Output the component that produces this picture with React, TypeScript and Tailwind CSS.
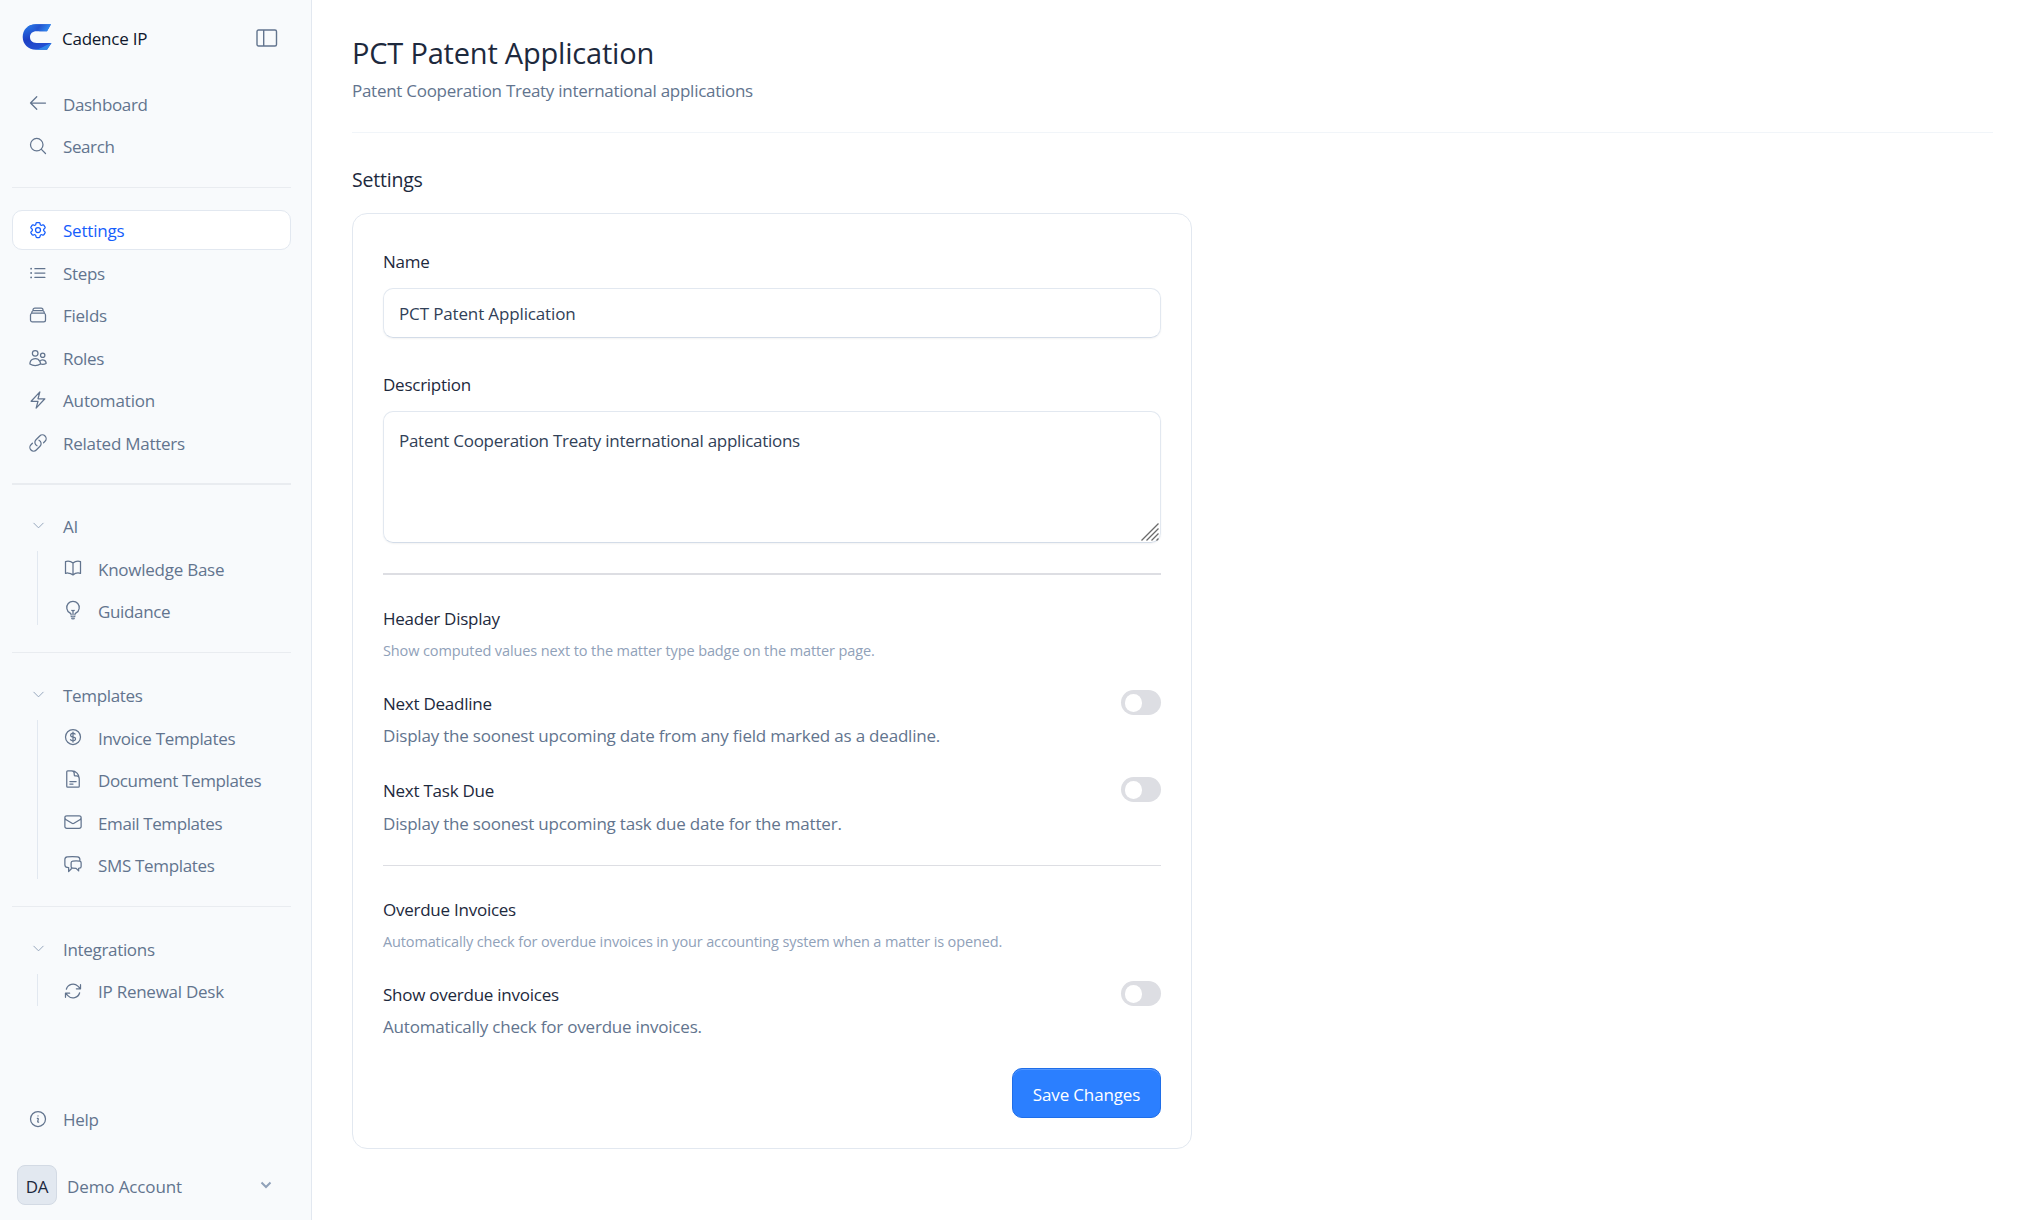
import type { ReactNode } from "react";
import type { IconType } from "react-icons";
import {
  HiOutlineArrowLeft,
  HiOutlineMagnifyingGlass,
  HiOutlineCog6Tooth,
  HiOutlineListBullet,
  HiOutlineRectangleStack,
  HiOutlineUsers,
  HiOutlineBolt,
  HiOutlineLink,
  HiOutlineBookOpen,
  HiOutlineLightBulb,
  HiOutlineCurrencyDollar,
  HiOutlineDocumentText,
  HiOutlineEnvelope,
  HiOutlineChatBubbleLeftRight,
  HiOutlineArrowPath,
  HiOutlineInformationCircle,
  HiOutlineChevronDown,
} from "react-icons/hi2";

function Logo() {
  return (
    <svg width="30" height="26" viewBox="0 0 30 26" className="shrink-0">
      <defs>
        <linearGradient id="logoTop" x1="0" y1="0" x2="1" y2="0.2">
          <stop offset="0" stopColor="#2a7be8" />
          <stop offset="0.55" stopColor="#2454cf" />
          <stop offset="1" stopColor="#2f8af0" />
        </linearGradient>
        <linearGradient id="logoBody" x1="0" y1="0" x2="0.3" y2="1">
          <stop offset="0" stopColor="#2a80ec" />
          <stop offset="0.6" stopColor="#1d3fc4" />
          <stop offset="1" stopColor="#2450d2" />
        </linearGradient>
      </defs>
      <path d="M29 0.3H14C5.500 0.300 0.700 6 0.700 13C0.700 20 6 25.700 14 25.700H25L29.500 18.900H14.500C10.500 18.900 8 16.500 8 13C8 9.500 10.500 7.200 14.500 7.200H25Z" fill="url(#logoBody)" />
      <path d="M29 0.300H14C10.500 0.300 7.500 1.300 5.300 3C10 2.500 13 5 17.500 7.200H25Z" fill="url(#logoTop)" />
      <path d="M13 25.700C17 25.500 21 22.500 29.500 18.900L25 25.700Z" fill="#2f86ea" />
    </svg>
  );
}

function PanelIcon() {
  return (
    <svg width="22" height="18" viewBox="0 0 22 18" fill="none" stroke="#62748e" strokeWidth="1.400">
      <rect x="1" y="1" width="19.500" height="16" rx="1.500" />
      <path d="M7.700 1V17" />
    </svg>
  );
}

type NavItemProps = {
  icon: IconType;
  label: string;
  active?: boolean;
  track?: string;
  pad?: string;
};

function NavItem({ icon: Icon, label, active, track = "tracking-[-0.25px]", pad = "pt-[3px]" }: NavItemProps) {
  return (
    <div
      className={`mb-[2.5px] flex h-10 items-center rounded-[10px] border pl-[15px] ${
        active ? "border-slate-200 bg-white text-[#155dfc]" : "border-transparent text-[#62748e]"
      }`}
    >
      <Icon size={20} strokeWidth={1.5} className="shrink-0" />
      <span className={`ml-[15px] leading-[30px] ${pad} ${track}`}>{label}</span>
    </div>
  );
}

function Group({ title, children }: { title: string; children: ReactNode }) {
  return (
    <div>
      <div className="mb-[2.5px] flex h-10 items-center pl-[19px] text-[#62748e]">
        <HiOutlineChevronDown size={15} className="mt-px shrink-0 text-[#90a1b9]" />
        <span className="ml-[17px] pt-[4px] leading-[30px] tracking-[-0.32px]">{title}</span>
      </div>
      <div className="relative pl-[35px]">
        <div className="absolute top-[3px] bottom-[5px] left-[25px] w-px bg-slate-200" />
        {children}
      </div>
    </div>
  );
}

function Field({ title, text, gap = "mt-[2px]" }: { title: string; text: string; gap?: string }) {
  return (
    <div className="flex h-[63px] justify-between">
      <div className="pt-px">
        <div className="leading-[30px] text-[#1d293d]">{title}</div>
        <div className={`leading-[30px] tracking-[-0.2px] text-[#62748e] ${gap}`}>{text}</div>
      </div>
      <div className="mt-[2px] flex h-[25px] w-10 items-center rounded-full bg-[#dddee3] pl-1">
        <div className="h-[18px] w-[17px] rounded-full bg-white" />
      </div>
    </div>
  );
}

function ResizeHandle() {
  return (
    <svg width="18" height="18" viewBox="0 0 18 18" stroke="#6b6b6b" strokeWidth="1.300" className="absolute right-[1px] bottom-[1px]">
      <path d="M0.500 17.500L17.500 0.500M5.500 17.500L17.500 5.500M10.500 17.500L17.500 10.500M15.500 17.500L17.500 15.500" />
    </svg>
  );
}

export default function App() {
  return (
    <div className="flex h-[1220px] w-[2025px] overflow-hidden bg-white font-['Open_Sans',sans-serif] text-[17px] tracking-[-0.25px] whitespace-nowrap">
      <aside className="flex w-[312px] shrink-0 flex-col border-r border-slate-200 bg-slate-50 pr-5 pl-3">
        <div className="flex h-[83px] items-start pt-6 pl-[10px]">
          <Logo />
          <span className="ml-[10px] leading-[30px] text-[#0f172b]">Cadence IP</span>
          <span className="mt-[4.500px] mr-[13px] ml-auto">
            <PanelIcon />
          </span>
        </div>
        <NavItem icon={HiOutlineArrowLeft} label="Dashboard" track="tracking-[-0.35px]" />
        <NavItem icon={HiOutlineMagnifyingGlass} label="Search" track="tracking-[-0.4px]" />
        <div className="mt-[19px] mb-[22px] h-px shrink-0 bg-[#e9ecf0]" />
        <NavItem icon={HiOutlineCog6Tooth} label="Settings" active pad="pt-[2px]" track="tracking-[-0.2px]" />
        <NavItem icon={HiOutlineListBullet} label="Steps" pad="pt-[2px]" track="tracking-[-0.35px]" />
        <NavItem icon={HiOutlineRectangleStack} label="Fields" pad="pt-[2px]" />
        <NavItem icon={HiOutlineUsers} label="Roles" pad="pt-[2px]" track="tracking-[-0.3px]" />
        <NavItem icon={HiOutlineBolt} label="Automation" pad="pt-[2px]" track="tracking-[-0.15px]" />
        <NavItem icon={HiOutlineLink} label="Related Matters" pad="pt-[2px]" />
        <div className="mt-[18px] mb-[20px] h-[2px] shrink-0 bg-[#e9ecf0]" />
        <Group title="AI">
          <NavItem icon={HiOutlineBookOpen} label="Knowledge Base" pad="pt-[4px]" />
          <NavItem icon={HiOutlineLightBulb} label="Guidance" pad="pt-[4px]" track="tracking-[-0.35px]" />
        </Group>
        <div className="mt-[19.500px] mb-[21px] h-px shrink-0 bg-[#e9ecf0]" />
        <Group title="Templates">
          <NavItem icon={HiOutlineCurrencyDollar} label="Invoice Templates" pad="pt-[4px]" track="tracking-[-0.33px]" />
          <NavItem icon={HiOutlineDocumentText} label="Document Templates" pad="pt-[4px]" track="tracking-[-0.37px]" />
          <NavItem icon={HiOutlineEnvelope} label="Email Templates" pad="pt-[4px]" track="tracking-[-0.4px]" />
          <NavItem icon={HiOutlineChatBubbleLeftRight} label="SMS Templates" pad="pt-[4px]" track="tracking-[-0.33px]" />
        </Group>
        <div className="mt-[19.500px] mb-[21px] h-px shrink-0 bg-[#e9ecf0]" />
        <Group title="Integrations">
          <NavItem icon={HiOutlineArrowPath} label="IP Renewal Desk" />
        </Group>
        <div className="mt-auto">
          <NavItem icon={HiOutlineInformationCircle} label="Help" />
        </div>
        <div className="mt-[24px] mb-[15px] ml-[5px] flex h-10 items-center">
          <div className="flex size-10 items-center justify-center rounded-lg border border-[#d3dae4] bg-slate-200 pt-[3px] text-[#1d293d]">DA</div>
          <span className="ml-[10px] pt-[4px] tracking-[-0.12px] text-[#62748e]">Demo Account</span>
          <svg width="12" height="8" viewBox="0 0 12 8" fill="none" stroke="#90a1b9" strokeWidth="2" className="mr-[19px] ml-auto">
            <path d="M1.500 1.500L6 6L10.500 1.500" />
          </svg>
        </div>
      </aside>

      <main className="flex-1 pr-8 pl-10">
        <header className="h-[133px] border-b border-slate-100 pt-8">
          <h1 className="text-[29px] leading-[42px] tracking-[-0.2px] text-[#1d293d]">PCT Patent Application</h1>
          <p className="mt-[2px] leading-[30px] tracking-[-0.275px] text-[#62748e]">Patent Cooperation Treaty international applications</p>
        </header>
        <h2 className="mt-[32px] h-[48px] text-[19.500px] leading-[30px] tracking-[-0.2px] text-[#1d293d]">Settings</h2>
        <section className="h-[936px] w-[840px] rounded-[15px] border border-slate-200 px-[30px] pt-[33px]">
          <div className="leading-[30px] text-[#1d293d]">Name</div>
          <div className="mt-[11px] h-[50px] rounded-[10px] border border-slate-200 border-b-[#d3dce8] pt-[10px] pl-[15px] leading-[30px] tracking-[-0.14px] text-[#314158] shadow-[0_1px_2px_rgba(0,0,0,0.05)]">
            PCT Patent Application
          </div>
          <div className="mt-8 leading-[30px] text-[#1d293d]">Description</div>
          <div className="relative mt-[11px] h-[132px] rounded-[10px] border border-slate-200 border-b-[#d3dce8] pt-[14px] pl-[15px] leading-[30px] tracking-[-0.275px] text-[#314158] shadow-[0_1px_2px_rgba(0,0,0,0.05)]">
            Patent Cooperation Treaty international applications
            <ResizeHandle />
          </div>
          <div className="mt-[30px] h-[2px] bg-[#dddee3]" />
          <div className="mt-[29px] leading-[30px] text-[#1d293d]">Header Display</div>
          <div className="mt-[5px] mb-[25px] text-[14.500px] leading-6 tracking-[-0.11px] text-[#90a1b9]">
            Show computed values next to the matter type badge on the matter page.
          </div>
          <Field title="Next Deadline" text="Display the soonest upcoming date from any field marked as a deadline." />
          <div className="h-[24px]" />
          <Field title="Next Task Due" text="Display the soonest upcoming task due date for the matter." gap="mt-[3px]" />
          <div className="mt-[27px] h-px bg-[#dddee3]" />
          <div className="mt-[29px] leading-[30px] text-[#1d293d]">Overdue Invoices</div>
          <div className="mt-[5px] mb-[25px] text-[14.500px] leading-6 tracking-[-0.135px] text-[#90a1b9]">
            Automatically check for overdue invoices in your accounting system when a matter is opened.
          </div>
          <Field title="Show overdue invoices" text="Automatically check for overdue invoices." />
          <div className="mt-[26px] flex justify-end">
            <button className="h-[50px] w-[149px] rounded-[10px] border border-[#1f6ee8] bg-[#2b7fff] pt-[3px] tracking-[-0.15px] text-white shadow-[inset_0_1px_0_rgba(255,255,255,0.2)]">
              Save Changes
            </button>
          </div>
        </section>
      </main>
    </div>
  );
}
